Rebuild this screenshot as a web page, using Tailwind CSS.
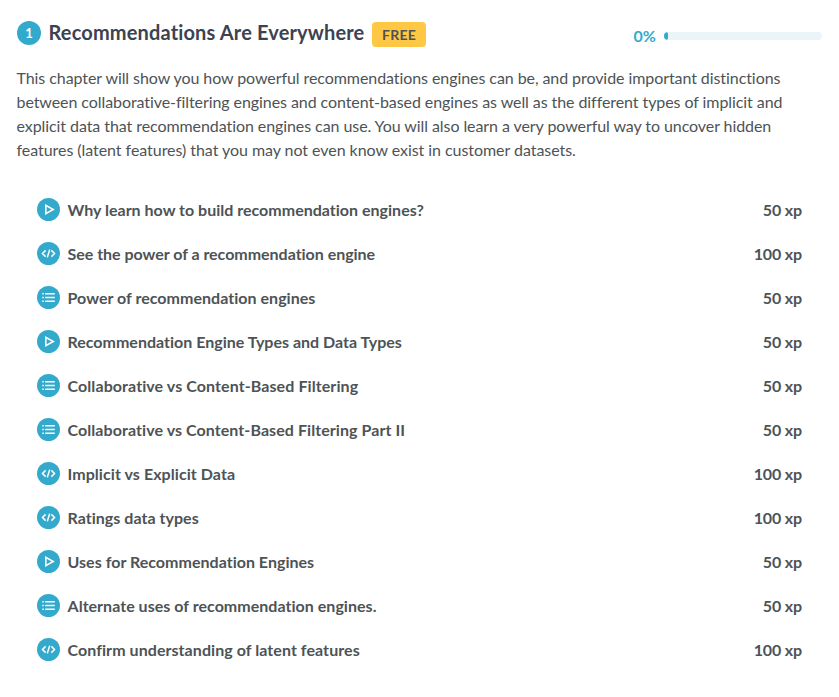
<!DOCTYPE html>
<html lang="en"><head><meta charset="utf-8"><title>Course chapter</title>
<script src="https://cdn.jsdelivr.net/npm/@tailwindcss/browser@4"></script></head>
<body class="bg-white font-['Lato',sans-serif] text-[#4d5356] [font-variant-ligatures:none]">
<svg class="hidden">
<symbol id="video" viewBox="0 0 23 23"><circle cx="11.5" cy="11.5" r="11.5" fill="#33aacc"/><path d="M8.8 7.4v8.2l7.4-4.1z" fill="none" stroke="#fff" stroke-width="1.6"/></symbol>
<symbol id="code" viewBox="0 0 23 23"><circle cx="11.5" cy="11.5" r="11.5" fill="#33aacc"/><path d="M8.6 8.4 5.5 11.5l3.1 3.1M14.4 8.4l3.1 3.1-3.1 3.1M12.7 7.6l-2.4 7.8" fill="none" stroke="#fff" stroke-width="1.5"/></symbol>
<symbol id="list" viewBox="0 0 23 23"><circle cx="11.5" cy="11.5" r="11.5" fill="#33aacc"/><path d="M5.3 7.7h1.5M5.3 11.5h1.5M5.3 15.3h1.5M8.2 7.7h9.6M8.2 11.5h9.6M8.2 15.3h9.6" fill="none" stroke="#fff" stroke-width="1.4"/></symbol>
</svg>
<main class="w-[839px] h-[697px] pt-[18px] pl-[17px] pr-[17px] overflow-hidden">
<header class="flex items-start h-[48px]">
<span class="mt-[3px] size-6 rounded-full bg-[#33aacc] text-white text-[13px] leading-none pt-px font-bold flex items-center justify-center">1</span>
<h1 class="-mt-px ml-[7.5px] w-[315.5px] text-[20px] leading-[30px] font-bold text-[#3d4251] whitespace-nowrap tracking-[0.15px]">Recommendations Are Everywhere</h1>
<span class="mt-1 ml-2 w-[54px] h-[25px] rounded-[4px] bg-[#ffc844] text-[14px] font-bold flex items-center justify-center tracking-[0.2px]">FREE</span>
<div class="ml-auto mt-[8px] flex items-center text-[#33aacc] font-bold text-[16px] leading-5">0%<div class="ml-2 w-[158px] h-2 rounded bg-[#ebf4f7] overflow-hidden"><div class="w-1 h-full rounded-full bg-[#33aacc]"></div></div></div>
</header>
<p class="-ml-[0.5px] text-[16px] leading-6 whitespace-nowrap tracking-[-0.075px]">This chapter will show you how powerful recommendations engines can be, and provide important distinctions<br>between collaborative-filtering engines and content-based engines as well as the different types of implicit and<br>explicit data that recommendation engines can use. You will also learn a very powerful way to uncover hidden<br><span class="tracking-[-0.05px]">features (latent features) that you may not even know exist in customer datasets.</span></p>
<ul class="mt-[26px] px-5 text-[16px] font-bold" id="lessons"></ul>
</main>
<script>
const lessons=[["video","Why learn how to build recommendation engines?",50,.01],["code","See the power of a recommendation engine",100,-.025],["list","Power of recommendation engines",50,.03],["video","Recommendation Engine Types and Data Types",50,0],["list","Collaborative vs Content-Based Filtering",50,.09],["list","Collaborative vs Content-Based Filtering Part II",50,.075],["code","Implicit vs Explicit Data",100,.07],["code","Ratings data types",100,.03],["video","Uses for Recommendation Engines",50,.02],["list","Alternate uses of recommendation engines.",50,.03],["code","Confirm understanding of latent features",100,.065]];
document.getElementById("lessons").innerHTML=lessons.map(([i,t,x,s])=>`<li class="flex items-center h-11"><svg class="size-[23px] mr-[7.5px] -mt-px"><use href="#${i}"/></svg><span style="letter-spacing:${s}px">${t}</span><span class="ml-auto tracking-[-0.15px]">${x} xp</span></li>`).join("");
</script>
</body></html>
